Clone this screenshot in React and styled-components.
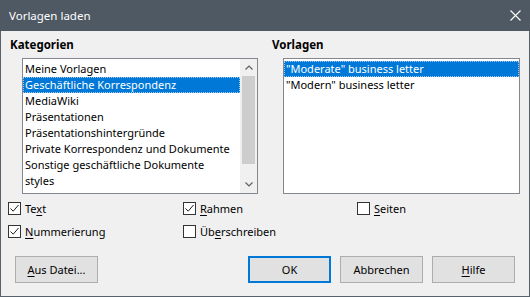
import React from "react";
import styled, { createGlobalStyle } from "styled-components";

const categories = [
  "Meine Vorlagen",
  "Geschäftliche Korrespondenz",
  "MediaWiki",
  "Präsentationen",
  "Präsentationshintergründe",
  "Private Korrespondenz und Dokumente",
  "Sonstige geschäftliche Dokumente",
  "styles",
  "Technische Zeichnungen",
];

const templates = ['"Moderate" business letter', '"Modern" business letter'];

const Check = ({ checked, children }) => (
  <CheckLabel>
    <Box>
      {checked && (
        <svg width="11" height="11" viewBox="0 0 11 11">
          <path d="M1.5 5.5 L4.2 8.2 L9.5 2" fill="none" stroke="#222" strokeWidth="1" />
        </svg>
      )}
    </Box>
    <span>{children}</span>
  </CheckLabel>
);

const App = () => {
  return (
    <>
      <GlobalStyle />
      <Window>
        <TitleBar>
          <span>Vorlagen laden</span>
          <svg width="11" height="11" viewBox="0 0 11 11">
            <path d="M0.5 0.5 L10.5 10.5 M10.5 0.5 L0.5 10.5" stroke="#fff" strokeWidth="1.1" />
          </svg>
        </TitleBar>

        <Body>
          <Panels>
            <Column>
              <Heading>Kategorien</Heading>
              <ListBox $left={12} $width={236}>
                <Items>
                  {categories.map((c, i) => (
                    <Item key={c} $selected={i === 1}>
                      {c}
                    </Item>
                  ))}
                </Items>
                <ScrollBar>
                  <Arrow>
                    <svg width="8" height="5" viewBox="0 0 8 5">
                      <path d="M0.5 4.5 L4 1 L7.5 4.5" fill="none" stroke="#606060" strokeWidth="1.2" />
                    </svg>
                  </Arrow>
                  <Track>
                    <Thumb />
                  </Track>
                  <Arrow>
                    <svg width="8" height="5" viewBox="0 0 8 5">
                      <path d="M0.5 0.5 L4 4 L7.5 0.5" fill="none" stroke="#606060" strokeWidth="1.2" />
                    </svg>
                  </Arrow>
                </ScrollBar>
              </ListBox>
            </Column>
            <Column>
              <Heading>Vorlagen</Heading>
              <ListBox $left={11} $width={237}>
                <Items>
                  {templates.map((t, i) => (
                    <Item key={t} $selected={i === 0}>
                      {t}
                    </Item>
                  ))}
                </Items>
              </ListBox>
            </Column>
          </Panels>

          <Checks>
            <Check checked>
              Te<u>x</u>t
            </Check>
            <Check checked>
              <u>R</u>ahmen
            </Check>
            <Check>
              <u>S</u>eiten
            </Check>
            <Check checked>
              <u>N</u>ummerierung
            </Check>
            <Check>
              Üb<u>e</u>rschreiben
            </Check>
          </Checks>

          <Buttons>
            <Button>
              <u>A</u>us Datei...
            </Button>
            <Group>
              <Button $default>OK</Button>
              <Button>Abbrechen</Button>
              <Button>
                <u>H</u>ilfe
              </Button>
            </Group>
          </Buttons>
        </Body>
      </Window>
    </>
  );
};

const GlobalStyle = createGlobalStyle`
  body {
    margin: 0;
    background: #f0f0f0;
    font-family: "Noto Sans", "Open Sans", sans-serif;
    font-size: 11px;
    color: #000;
  }
  u {
    text-underline-offset: 2px;
  }
`;

const Window = styled.div`
  width: 530px;
  height: 297px;
  box-sizing: border-box;
  border: 1px solid #58626c;
  border-top: none;
  background: #f0f0f0;
  display: flex;
  flex-direction: column;
`;

const TitleBar = styled.div`
  height: 31px;
  flex: none;
  background: #4f5964;
  color: #fff;
  display: flex;
  align-items: center;
  justify-content: space-between;
  padding: 0 9px 1px 9px;
  box-sizing: border-box;
  font-size: 11.5px;
  margin: 0 -1px;
`;

const Body = styled.div`
  flex: 1;
  padding: 6px 9px 0 9px;
  display: flex;
  flex-direction: column;
`;

const Panels = styled.div`
  display: grid;
  grid-template-columns: 262px 1fr;
`;

const Column = styled.div`
  display: flex;
  flex-direction: column;
`;

const Heading = styled.div`
  font-weight: bold;
  font-size: 11.5px;
  line-height: 15px;
  height: 15px;
  margin-bottom: 6px;
`;

const ListBox = styled.div`
  margin-left: ${(p) => p.$left}px;
  width: ${(p) => p.$width}px;
  height: 136px;
  box-sizing: border-box;
  border: 1px solid #828790;
  background: #fff;
  display: flex;
  overflow: hidden;
`;

const Items = styled.div`
  flex: 1;
  padding-top: 2px;
  overflow: hidden;
`;

const Item = styled.div`
  height: 16px;
  line-height: 16px;
  padding-left: 2px;
  white-space: nowrap;
  background: ${(p) => (p.$selected ? "#0078d7" : "transparent")};
  color: ${(p) => (p.$selected ? "#fff" : "#000")};
  outline: ${(p) => (p.$selected ? "1px dotted #9fc9ef" : "none")};
  outline-offset: -1px;
`;

const ScrollBar = styled.div`
  width: 17px;
  flex: none;
  background: #f0f0f0;
  display: flex;
  flex-direction: column;
`;

const Arrow = styled.div`
  height: 17px;
  display: flex;
  align-items: center;
  justify-content: center;
`;

const Track = styled.div`
  flex: 1;
  padding: 0 2px;
`;

const Thumb = styled.div`
  height: 88px;
  background: #cdcdcd;
`;

const Checks = styled.div`
  display: grid;
  grid-template-columns: 175px 174px auto;
  row-gap: 6px;
  margin: 6px 0 0 -2px;
`;

const CheckLabel = styled.label`
  display: flex;
  align-items: center;
  gap: 4px;
  height: 17px;
`;

const Box = styled.span`
  width: 13px;
  height: 13px;
  box-sizing: border-box;
  border: 1px solid #333;
  background: #fff;
  display: flex;
  align-items: center;
  justify-content: center;
`;

const Buttons = styled.div`
  display: flex;
  justify-content: space-between;
  margin-top: 16px;
  padding: 0 5px;
`;

const Group = styled.div`
  display: flex;
  gap: 9px;
`;

const Button = styled.button`
  width: 83px;
  height: 27px;
  box-sizing: border-box;
  font-family: inherit;
  font-size: 11px;
  color: #000;
  background: #e1e1e1;
  border: ${(p) => (p.$default ? "2px solid #0078d7" : "1px solid #adadad")};
  padding: 0;
`;

export default App;
